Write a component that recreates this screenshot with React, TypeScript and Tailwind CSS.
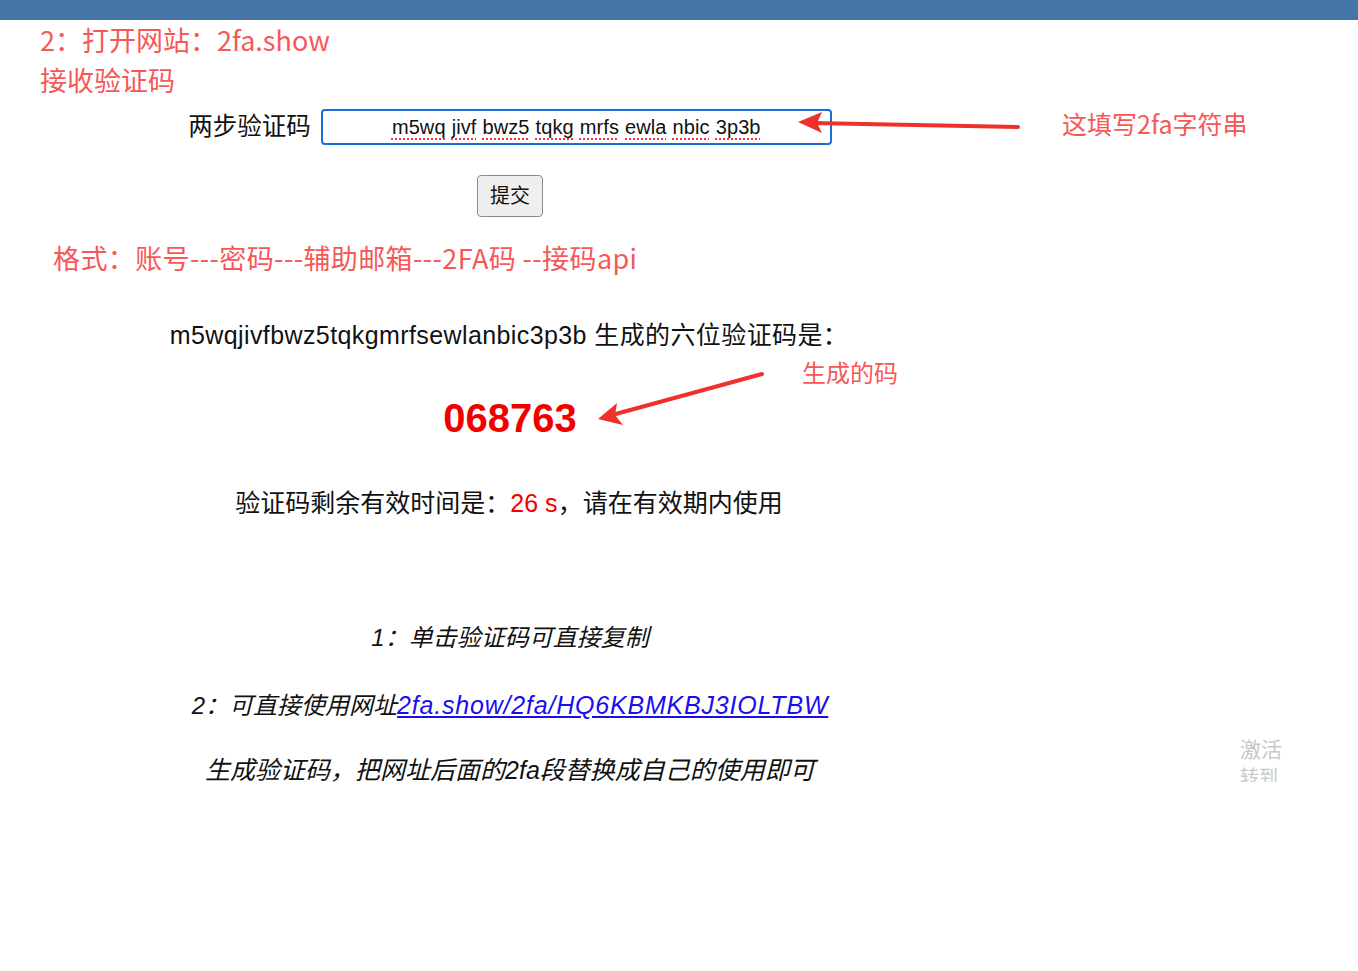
import { FC } from 'react';

const cjk = '"Liberation Sans", "Noto Sans CJK SC", sans-serif';
const note = '"Noto Sans CJK SC", "Noto Sans", sans-serif';

const secret = 'm5wqjivfbwz5tqkgmrfsewlanbic3p3b';
const groups = secret.match(/.{1,4}/g) ?? [];

// red hand-drawn style arrows laid over the page
const Arrows: FC = () => (
  <svg className="pointer-events-none absolute left-0 top-0" width="1358" height="971">
    <line x1="1018" y1="127" x2="812" y2="123" stroke="#f0302c" strokeWidth="4" strokeLinecap="round" />
    <polygon points="798,122 822,112 817,123 822,133" fill="#f0302c" />
    <line x1="762" y1="374" x2="612" y2="415" stroke="#f0302c" strokeWidth="4" strokeLinecap="round" />
    <polygon points="598,419 617,403 615,415 623,425" fill="#f0302c" />
  </svg>
);

const App: FC = () => {
  return (
    <div className="relative min-h-[971px] w-[1358px] bg-white" style={{ fontFamily: cjk }}>
      <div className="h-[20px] bg-[#4475a6]" />

      <div className="relative h-[762px] overflow-hidden">
        <div className="pl-[40px] text-[27px] leading-[40px] text-[#f65858]" style={{ fontFamily: note }}>
          <div>2：打开网站：2fa.show</div>
          <div>接收验证码</div>
        </div>

        <div className="w-[1020px]">
          <div className="mt-[9px] flex items-center justify-center gap-[10px]">
            <span className="text-[24.5px] text-[#111]">两步验证码</span>
            <div className="flex h-[36px] w-[511px] items-center justify-center gap-[6px] rounded-[4px] border-2 border-[#1b6fd8] text-[20px] tracking-[0.1px] text-[#111]">
              {groups.map(g => (
                <span key={g} className="underline decoration-red-500 decoration-dotted decoration-2 underline-offset-4">
                  {g}
                </span>
              ))}
            </div>
          </div>

          <div className="mt-[29px] flex justify-center">
            <button className="h-[42px] w-[66px] rounded-[4px] border border-[#8a8a8a] bg-[#efefef] text-[20px] text-[#111]">
              提交
            </button>
          </div>
        </div>

        <div className="mt-[21px] pl-[53px] text-[27px] leading-[40px] tracking-[0.4px] text-[#f65858]" style={{ fontFamily: note }}>
          格式：账号---密码---辅助邮箱---2FA码 --接码api
        </div>

        <div className="w-[1020px] text-center text-[#111]">
          <p className="mt-[39px] pr-[2px] text-[25px] leading-[36px] tracking-[0.4px]">{secret} 生成的六位验证码是：</p>
          <p className="mt-[37px] text-[40px] font-bold leading-[56px] text-[#f20000]">068763</p>
          <p className="mt-[39px] pr-[2px] text-[25px] leading-[36px]">
            验证码剩余有效时间是：<span className="text-[#f20000]">26 s</span>，请在有效期内使用
          </p>

          <div className="mt-[99px] text-[24px] italic leading-[36px]">
            <p>1：单击验证码可直接复制</p>
            <p className="mt-[31px]">
              2：可直接使用网址
              <a href="#" className="text-[25px] tracking-[0.8px] text-[#1a0dee] underline">
                2fa.show/2fa/HQ6KBMKBJ3IOLTBW
              </a>
            </p>
            <p className="mt-[28px] text-[25px]">生成验证码，把网址后面的2fa段替换成自己的使用即可</p>
          </div>
        </div>

        <div className="absolute left-[1240px] top-[712px] text-[#c8c8c8]" style={{ fontFamily: note }}>
          <div className="text-[21px] leading-[32px]">激活</div>
          <div className="text-[19px] leading-[24px]">转到</div>
        </div>
      </div>

      <span className="absolute left-[802px] top-[354px] text-[24px] leading-[36px] text-[#f65858]" style={{ fontFamily: note }}>
        生成的码
      </span>
      <span className="absolute left-[1062px] top-[104px] text-[25px] leading-[38px] text-[#f65858]" style={{ fontFamily: note }}>
        这填写2fa字符串
      </span>

      <Arrows />
    </div>
  );
};

export default App;
